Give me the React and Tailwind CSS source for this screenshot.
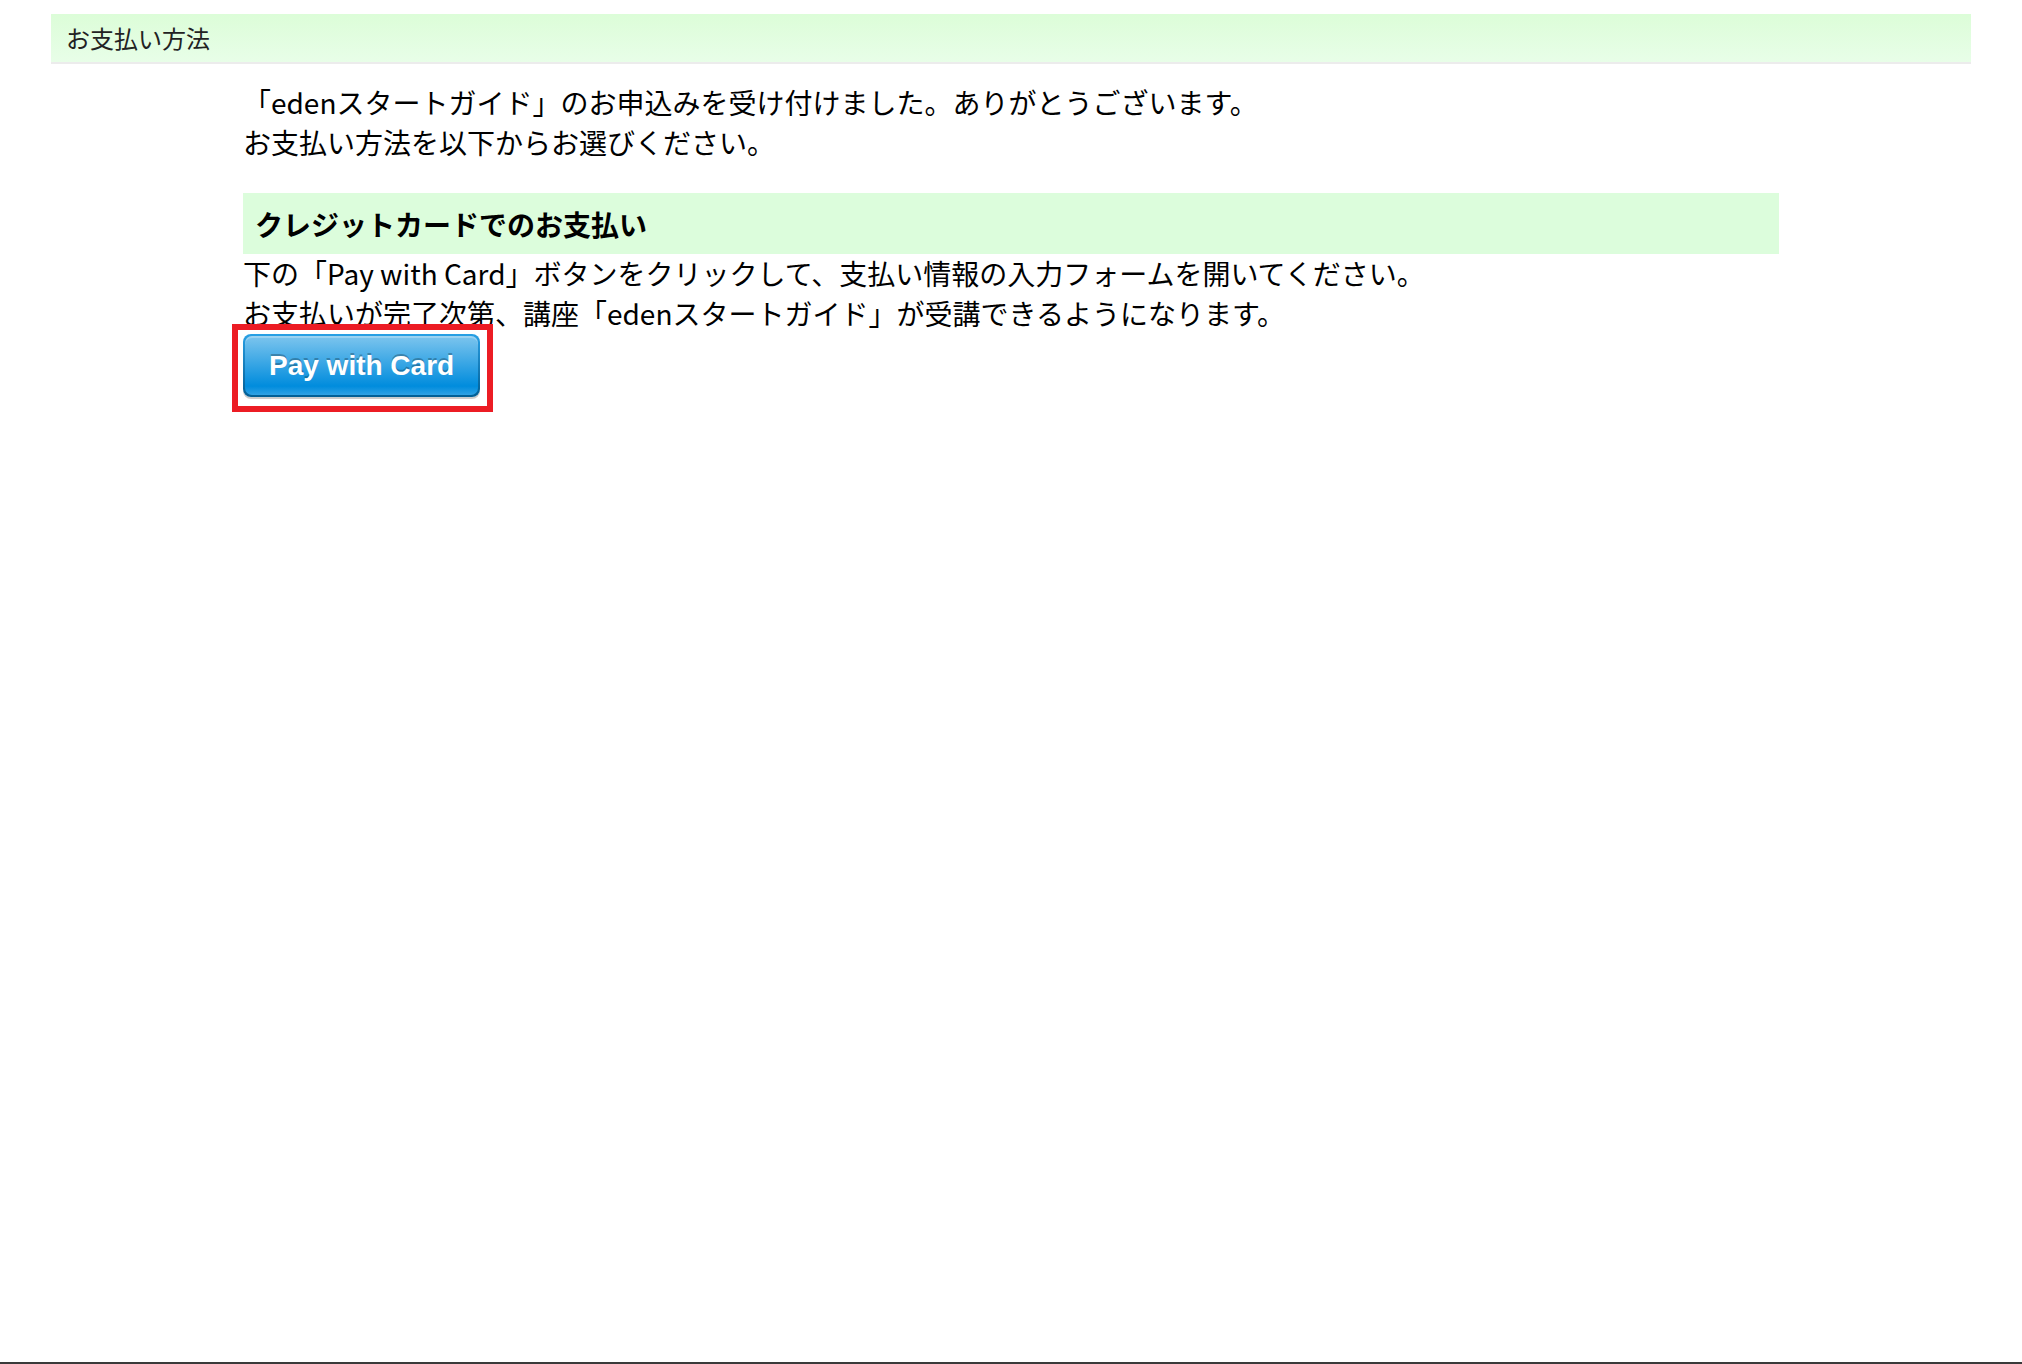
import React from "react";

export default function App() {
  return (
    <div
      className="min-h-[1364px] bg-white flex flex-col text-black font-['Noto_Sans_CJK_JP','Noto_Sans',sans-serif]"
    >
      <div className="flex-1">
        <div className="mx-[51px] mt-[14px] h-[50px] flex items-center pl-[15px] bg-gradient-to-b from-[#dcfdd8] to-[#e8fee8] border-b-2 border-[#ececec] text-[24px] text-[#222]">
          お支払い方法
        </div>

        <div className="w-[1536px] mx-auto">
          <p className="mt-[18px] text-[28px] leading-[40px]">
            「edenスタートガイド」のお申込みを受け付けました。ありがとうございます。
            <br />
            お支払い方法を以下からお選びください。
          </p>

          <div className="mt-[31px] h-[61px] bg-[#dcfddc] flex items-center pl-[12px] text-[28px] font-bold">
            クレジットカードでのお支払い
          </div>

          <p className="-mt-[1px] text-[28px] leading-[40px]">
            下の「Pay with Card」ボタンをクリックして、支払い情報の入力フォームを開いてください。
            <br />
            お支払いが完了次第、講座「edenスタートガイド」が受講できるようになります。
          </p>

          <div className="relative inline-block mt-[1px]">
            <button className="block p-[2px] rounded-[8px] bg-gradient-to-b from-[#28a0e5] to-[#015e94] shadow-[0_2px_0_rgba(0,0,0,0.2)]">
              <span className="block h-[59px] leading-[59px] px-[24px] rounded-[7px] bg-[linear-gradient(#7dc5ee,#008cdd_85%,#30a2e4)] shadow-[inset_0_2px_0_rgba(255,255,255,0.25)] text-white font-bold text-[28px] font-['Liberation_Sans',Arial,sans-serif] [text-shadow:0_-2px_0_rgba(0,0,0,0.25)]">
                Pay with Card
              </span>
            </button>
            <div className="absolute -left-[11px] -top-[10px] -right-[13px] -bottom-[15px] border-[6px] border-[#ec1c24] pointer-events-none" />
          </div>
        </div>
      </div>
      <div className="h-[2px] bg-[#3a3a3a]" />
    </div>
  );
}
